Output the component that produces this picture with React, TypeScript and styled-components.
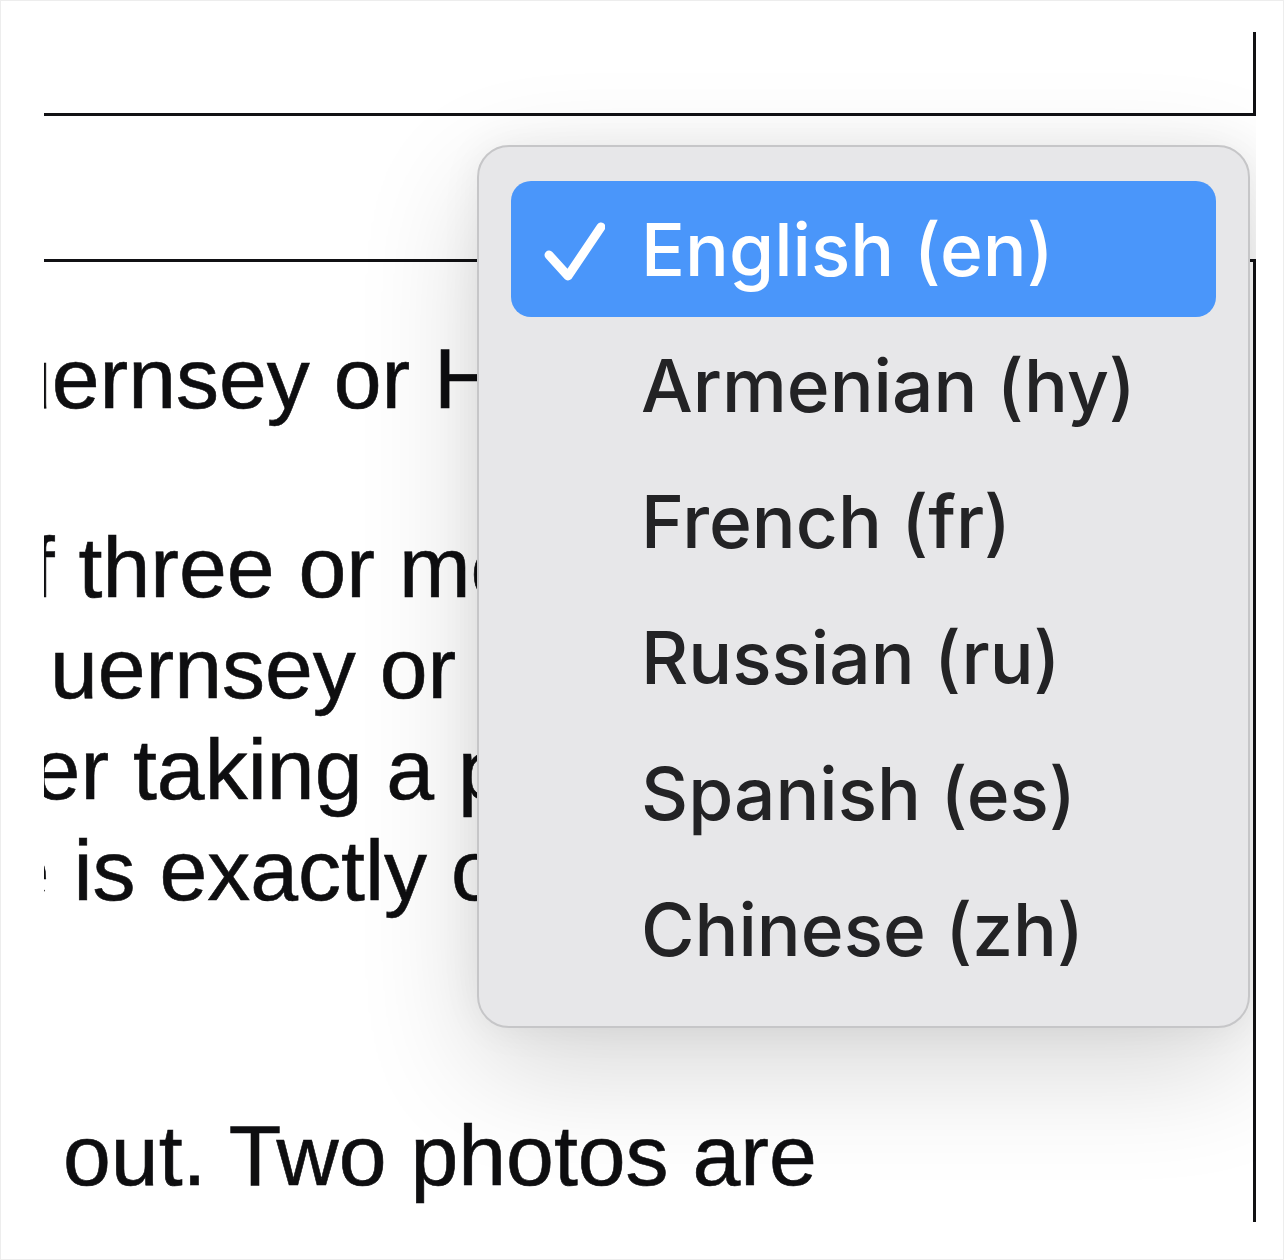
import React from "react";
import styled, { createGlobalStyle } from "styled-components";

const Languages = [
  { label: "English (en)", selected: true },
  { label: "Armenian (hy)", selected: false },
  { label: "French (fr)", selected: false },
  { label: "Russian (ru)", selected: false },
  { label: "Spanish (es)", selected: false },
  { label: "Chinese (zh)", selected: false },
];

// text lines of the description box, indents relative to its inner left edge
const BodyLines = [
  { text: "Guernsey or Herm", indent: 40, gapAbove: 0 },
  { text: "of three or more", indent: 86, gapAbove: 88 },
  { text: "Guernsey or Sark", indent: 86, gapAbove: 0 },
  { text: "after taking a photo", indent: 40, gapAbove: 0 },
  { text: "one is exactly one", indent: 9, gapAbove: 0 },
  { text: "out. Two photos are", indent: 166, gapAbove: 184 },
];

const GlobalStyle = createGlobalStyle`
  body {
    margin: 0;
    background: #ffffff;
    font-family: "Liberation Sans", Arial, sans-serif;
  }
`;

const App = () => {
  return (
    <>
      <GlobalStyle />
      <Frame>
        <Viewport>
          <FormColumn>
            <TitleField />
            <DescriptionField>
              {BodyLines.map((line) => (
                <BodyLine key={line.text} indent={line.indent} gapAbove={line.gapAbove}>
                  {line.text}
                </BodyLine>
              ))}
            </DescriptionField>
          </FormColumn>

          <Menu>
            {Languages.map((lang) => (
              <MenuItem key={lang.label} selected={lang.selected}>
                <CheckSlot>
                  {lang.selected && (
                    <svg width="64" height="64" viewBox="0 0 64 64">
                      <path
                        d="M8 38 L27 59 L60 10"
                        fill="none"
                        stroke="#ffffff"
                        strokeWidth="9"
                        strokeLinecap="round"
                        strokeLinejoin="round"
                      />
                    </svg>
                  )}
                </CheckSlot>
                <ItemLabel>{lang.label}</ItemLabel>
              </MenuItem>
            ))}
          </Menu>
        </Viewport>
      </Frame>
    </>
  );
};

const Frame = styled.div`
  width: 1284px;
  height: 1260px;
  box-sizing: border-box;
  border: 1px solid #ededed;
  padding: 31px 27px 37px 43px;
  background: #ffffff;
`;

const Viewport = styled.div`
  position: relative;
  width: 1212px;
  height: 1190px;
  overflow: hidden;
`;

const FormColumn = styled.div`
  display: flex;
  flex-direction: column;
  gap: 143px;
  margin-left: -150px;
  width: calc(100% + 150px);
`;

const TitleField = styled.div`
  height: 140px;
  margin-top: -56px;
  box-sizing: border-box;
  border: 3px solid #111114;
`;

const DescriptionField = styled.div`
  display: flex;
  flex-direction: column;
  height: 1100px;
  box-sizing: border-box;
  border: 3px solid #111114;
  padding-top: 66px;
`;

const BodyLine = styled.div<{ indent: number; gapAbove: number }>`
  margin-left: ${(p) => p.indent}px;
  margin-top: ${(p) => p.gapAbove}px;
  font-size: 86px;
  line-height: 101px;
  color: #0e0e10;
  white-space: nowrap;
  -webkit-text-stroke: 0.6px #0e0e10;
`;

const Menu = styled.div`
  position: absolute;
  left: 433px;
  top: 113px;
  width: 773px;
  box-sizing: border-box;
  padding: 34px 32px 29px;
  border: 2px solid #c6c6c8;
  border-radius: 32px;
  background: #e7e7e9;
  box-shadow: 0 40px 120px rgba(0, 0, 0, 0.16), 0 0 40px rgba(0, 0, 0, 0.06);
  display: flex;
  flex-direction: column;
`;

const MenuItem = styled.div<{ selected: boolean }>`
  display: flex;
  align-items: center;
  height: 136px;
  padding-left: 30px;
  border-radius: 20px;
  background: ${(p) => (p.selected ? "#4a96fa" : "transparent")};
  color: ${(p) => (p.selected ? "#ffffff" : "#232325")};
`;

const CheckSlot = styled.div`
  width: 64px;
  height: 64px;
  margin-right: 36px;
  flex-shrink: 0;
`;

const ItemLabel = styled.span`
  font-family: Inter, "Noto Sans", sans-serif;
  font-size: 73px;
  line-height: 1;
  font-weight: 450;
`;

export default App;
